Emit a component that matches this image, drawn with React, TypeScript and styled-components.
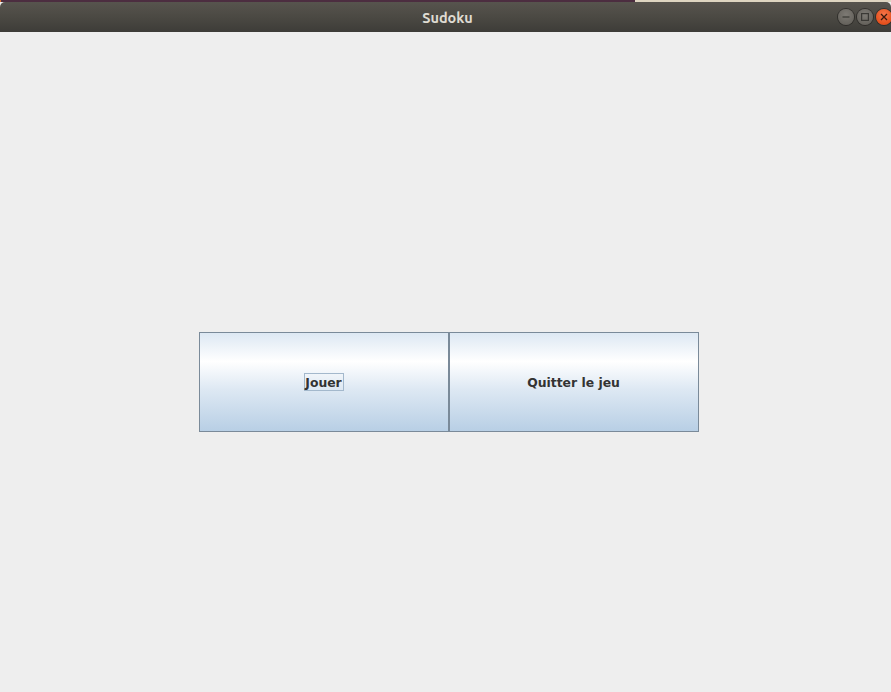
import React, { useState } from 'react'
import styled, { createGlobalStyle } from 'styled-components'

const GlobalStyle = createGlobalStyle`
  html, body {
    margin: 0;
    padding: 0;
    height: 100%;
    overflow: hidden;
    background: #eeeeee;
  }
  #root {
    height: 100%;
  }
`

const Screen = styled.div`
  display: flex;
  flex-direction: column;
  width: 891px;
  height: 692px;
`

// the desktop behind the window, 2px of it shows above the title bar
const Backdrop = styled.div`
  display: flex;
  height: 2px;
  flex-shrink: 0;
`

const BackdropPart = styled.div<{ $color: string; $width?: number }>`
  background: ${p => p.$color};
  ${p => (p.$width ? `width: ${p.$width}px;` : 'flex: 1;')}
`

const TitleBar = styled.div`
  position: relative;
  height: 30px;
  flex-shrink: 0;
  display: flex;
  align-items: center;
  justify-content: center;
  background: linear-gradient(to bottom, #57544e 0%, #4b4943 50%, #3d3c38 100%);
  border-radius: 5px 5px 0 0;
`

const Title = styled.span`
  font-family: 'Ubuntu', 'DejaVu Sans', sans-serif;
  font-weight: bold;
  font-size: 14.5px;
  color: #dfdbd2;
  margin-left: 4px;
`

const WindowControls = styled.div`
  position: absolute;
  right: -1px;
  top: 7px;
  display: flex;
  gap: 3px;
`

const Control = styled.div<{ $close?: boolean }>`
  width: 16px;
  height: 16px;
  border-radius: 50%;
  display: flex;
  align-items: center;
  justify-content: center;
  background: ${p =>
    p.$close
      ? 'radial-gradient(circle at 50% 35%, #f5764a 0%, #e5501d 70%, #c9431a 100%)'
      : 'radial-gradient(circle at 50% 35%, #7d7a74 0%, #67645e 70%, #55534e 100%)'};
  box-shadow: 0 0 0 1px rgba(30, 29, 26, 0.6);
`

const Content = styled.main`
  flex: 1;
  display: flex;
  align-items: flex-start;
  padding: 300px 0 0 199px;
`

const ButtonRow = styled.div`
  display: flex;
`

const MenuButton = styled.button`
  width: 250px;
  height: 100px;
  margin: 0;
  padding: 0;
  border: 1px solid #7a8a99;
  border-radius: 0;
  background: linear-gradient(
    to bottom,
    #dde8f3 0%,
    #ffffff 29%,
    #dde8f3 58%,
    #b8cfe5 100%
  );
  font-family: 'DejaVu Sans', sans-serif;
  font-weight: bold;
  font-size: 12.4px;
  color: #333333;
  display: flex;
  align-items: center;
  justify-content: center;
  cursor: pointer;
  outline: none;
`

const Label = styled.span<{ $focused?: boolean }>`
  padding: 1px 1px 0 0;
  line-height: 15px;
  border: 1px solid ${p => (p.$focused ? '#a3b8cc' : 'transparent')};
`

const App = () => {
  const [focused, setFocused] = useState(0)

  return (
    <>
      <GlobalStyle />
      <Screen>
        <Backdrop>
          <BackdropPart $color="#e2722f" $width={1} />
          <BackdropPart $color="#4c2d40" $width={634} />
          <BackdropPart $color="#ded5c1" />
        </Backdrop>
        <TitleBar>
          <Title>Sudoku</Title>
          <WindowControls>
            <Control>
              <svg width="8" height="8" viewBox="0 0 8 8">
                <path d="M0.5 4h7" stroke="#3a3935" strokeWidth="1.2" />
              </svg>
            </Control>
            <Control>
              <svg width="8" height="8" viewBox="0 0 8 8">
                <rect x="0.6" y="0.6" width="6.8" height="6.8" fill="none" stroke="#3a3935" strokeWidth="1.2" />
              </svg>
            </Control>
            <Control $close>
              <svg width="8" height="8" viewBox="0 0 8 8">
                <path d="M1 1l6 6M7 1l-6 6" stroke="#3a1a0e" strokeWidth="1.3" />
              </svg>
            </Control>
          </WindowControls>
        </TitleBar>
        <Content>
          <ButtonRow>
            <MenuButton onFocus={() => setFocused(0)} autoFocus>
              <Label $focused={focused === 0}>Jouer</Label>
            </MenuButton>
            <MenuButton onFocus={() => setFocused(1)}>
              <Label $focused={focused === 1}>Quitter le jeu</Label>
            </MenuButton>
          </ButtonRow>
        </Content>
      </Screen>
    </>
  )
}

export default App
